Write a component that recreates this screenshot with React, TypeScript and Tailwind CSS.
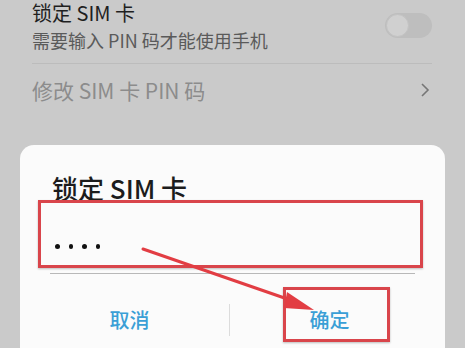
import React from 'react';

const font = { fontFamily: '"Noto Sans CJK SC", "Noto Sans", sans-serif' };

const App = () => {
  return (
    <div className="relative w-[465px] h-[348px] overflow-hidden bg-[#cacaca]" style={font}>
      {/* settings list behind the dialog */}
      <div className="pl-[32px] pr-[33px]">
        <div className="flex items-start justify-between">
          <div>
            <div className="text-[20px] leading-[26px] text-[#1f1f1f]">锁定 SIM 卡</div>
            <div className="text-[18px] leading-[24px] text-[#5a5a5a] mt-[2px]">需要输入 PIN 码才能使用手机</div>
          </div>
          <div className="mt-[13px] w-[47px] h-[25px] rounded-full bg-[#bebebe] p-[1px]">
            <div className="w-[23px] h-[23px] rounded-full bg-[#d0d0d0] border border-[#c2c2c2]" />
          </div>
        </div>
        <div className="mt-[11px] h-px bg-[#bcbcbc]" />
        <div className="flex items-center justify-between h-[51px]">
          <span className="text-[21px] text-[#8c8c8c] mt-[2px]">修改 SIM 卡 PIN 码</span>
          <svg width="10" height="16" viewBox="0 0 10 16" className="mr-[2px]">
            <path d="M2 2l6 6-6 6" fill="none" stroke="#767676" strokeWidth="1.6" />
          </svg>
        </div>
      </div>

      {/* dialog */}
      <div className="mt-[30px] mx-[20px] h-[220px] rounded-[14px] bg-[#fbfbfb]">
        <div className="pt-[26px] pl-[32px] text-[26px] leading-[34px] text-[#1c1c1c] font-medium">锁定 SIM 卡</div>
        <div className="mx-[30px] mt-[39px] flex items-end pb-[24px] border-b-[1.5px] border-[#b8b8b8]">
          <div className="flex gap-[9px] pl-[5px]">
            <span className="w-[4.5px] h-[4.5px] rounded-full bg-[#111]" />
            <span className="w-[4.5px] h-[4.5px] rounded-full bg-[#111]" />
            <span className="w-[4.5px] h-[4.5px] rounded-full bg-[#111]" />
            <span className="w-[4.5px] h-[4.5px] rounded-full bg-[#111]" />
          </div>
        </div>
        <div className="flex items-center mt-[30px] h-[32px]">
          <div className="flex-1 text-center text-[20px] text-[#3a9fd6] font-medium pl-[10px]">取消</div>
          <div className="w-px h-[32px] bg-[#dcdcdc]" />
          <div className="flex-1 text-center text-[20px] text-[#3a9fd6] font-medium pr-[16px]">确定</div>
        </div>
      </div>

      {/* red annotations */}
      <div className="absolute left-[38px] top-[200px] w-[385px] h-[68px] border-[3px] border-[#d9454b] shadow-[0_1px_2px_rgba(0,0,0,0.25)]" />
      <div className="absolute left-[283px] top-[287px] w-[107px] h-[55px] border-[3px] border-[#d9454b] shadow-[0_1px_2px_rgba(0,0,0,0.25)]" />
      <svg className="absolute left-0 top-0" width="465" height="348" viewBox="0 0 465 348">
        <line x1="143" y1="249" x2="296" y2="302" stroke="#e23d43" strokeWidth="3" strokeLinecap="round" />
        <polygon points="314,310 287,292 284,308" fill="#e23d43" />
      </svg>
    </div>
  );
};

export default App;
